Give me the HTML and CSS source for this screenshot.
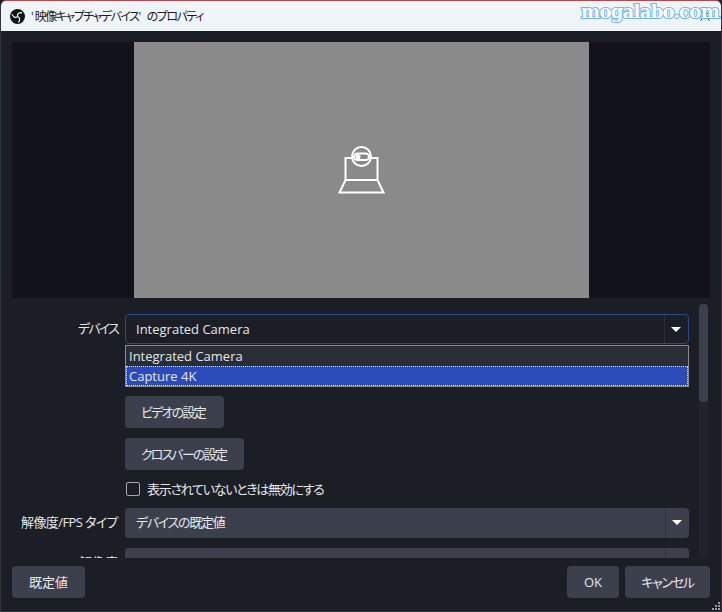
FILE: index.html
```html
<!DOCTYPE html>
<html lang="ja">
<head>
  <meta charset="UTF-8" />
  <title>'映像キャプチャデバイス' のプロパティ</title>
  <link rel="stylesheet" href="styles.css">
</head>
<body>

  <div class="window">
    <div class="titlebar">
      <svg class="obs-logo" width="15" height="15" viewBox="0 0 16 16">
        <circle cx="8" cy="8" r="8" fill="#111"/>
        <g fill="none" stroke="#f0f4f9" stroke-width="1.300">
          <path d="M8 8C7.500 5.500 9.500 3.200 13 4.200"/>
          <path d="M8 8C7.500 5.500 9.500 3.200 13 4.200" transform="rotate(120 8 8)"/>
          <path d="M8 8C7.500 5.500 9.500 3.200 13 4.200" transform="rotate(240 8 8)"/>
        </g>
      </svg>
      <span class="title-text"><span class="quote">'</span>映像キャプチャデバイス<span class="quote">'</span> のプロパティ</span>
      <svg class="close-x" width="10" height="10" viewBox="0 0 10 10">
        <path d="M0.500 0.500L9.500 9.500M9.500 0.500L0.500 9.500" stroke="#222" stroke-width="1" fill="none"/>
      </svg>
    </div>
    <div class="watermark">mogalabo.com</div>

    <div class="preview">
      <div class="preview-image">
        <svg width="48" height="48" viewBox="0 0 48 48">
          <g fill="none" stroke="#fff" stroke-width="2">
            <path d="M15 12H8.500V34M34 12H40.500V34"/>
            <path d="M8.500 34H40.500L46.500 46.500H2.500Z"/>
            <circle cx="24.500" cy="10.500" r="9.500"/>
            <rect x="17" y="7.500" width="15" height="6.500" rx="3.200"/>
          </g>
          <circle cx="21" cy="10.800" r="2.500" fill="#fff"/>
        </svg>
      </div>
    </div>

    <div class="settings">
      <div class="fields">
        <div class="row">
          <label class="row-label kana-tight">デバイス</label>
          <div class="combo combo-open">
            <span class="combo-value">Integrated Camera</span>
            <span class="combo-arrow"></span>
          </div>
        </div>
        <div class="row row-menu-space"></div>
        <div class="row">
          <button class="btn btn-video kana-tight">ビデオの設定</button>
        </div>
        <div class="row">
          <button class="btn btn-crossbar kana-tight">クロスバーの設定</button>
        </div>
        <div class="row row-check">
          <span class="checkbox"></span>
          <span class="kana">表示されていないときは無効にする</span>
        </div>
        <div class="row">
          <label class="row-label label-mixed">解像度/FPS タイプ</label>
          <div class="combo">
            <span class="combo-value combo-value-ja kana">デバイスの既定値</span>
            <span class="combo-arrow"></span>
          </div>
        </div>
        <div class="row">
          <label class="row-label">解像度</label>
          <div class="combo">
            <span class="combo-value"></span>
            <span class="combo-arrow"></span>
          </div>
        </div>
      </div>
      <div class="scrollbar"><div class="scroll-thumb"></div></div>

      <ul class="combo-menu">
        <li>Integrated Camera</li>
        <li class="selected">Capture 4K</li>
      </ul>
    </div>

    <div class="footer">
      <button class="btn btn-defaults">既定値</button>
      <div class="footer-right">
        <button class="btn btn-ok">OK</button>
        <button class="btn btn-cancel kana">キャンセル</button>
      </div>
    </div>
    <svg class="grip" width="10" height="10" viewBox="0 0 10 10">
      <path d="M7 1h2v2H7zM4 4h2v2H4zM7 4h2v2H7zM1 7h2v2H1zM4 7h2v2H4zM7 7h2v2H7z" fill="#9a9ca4"/>
    </svg>
  </div>

</body>
</html>
```

FILE: styles.css
```css
html, body {
  margin: 0;
  padding: 0;
  overflow: hidden;
}

body {
  background-color: #1c1e26;
  color: #e6e7ea;
  font-family: "Open Sans", "Noto Sans CJK JP", sans-serif;
  font-size: 13px;
  font-feature-settings: "palt";
}

.kana {
  letter-spacing: -1.3px;
}

.kana-tight {
  letter-spacing: -1.8px;
}

.label-mixed {
  letter-spacing: -0.6px;
}

.window {
  position: relative;
  display: flex;
  flex-direction: column;
  width: 722px;
  height: 612px;
  box-sizing: border-box;
  background-color: #1c1e26;
  border-top: 1px solid #b84a4e;
  border-left: 1px solid #33353d;
  border-right: 1px solid #33353d;
  border-bottom: 1px solid #33353d;
  border-radius: 6px 6px 0 0;
  overflow: hidden;
}

.titlebar {
  display: flex;
  align-items: center;
  height: 30px;
  padding: 0 9px;
  flex-shrink: 0;
  background-color: #eff4f9;
  color: #1c1c1c;
  font-size: 12px;
}

.obs-logo {
  margin-right: 6px;
}

.title-text {
  flex: 1;
  letter-spacing: -1.5px;
  word-spacing: 3px;
}

.quote {
  letter-spacing: 1px;
}

.close-x {
  margin-right: 2px;
}

.watermark {
  position: absolute;
  top: 0;
  right: 2px;
  font-family: "DejaVu Serif", serif;
  font-size: 18px;
  font-weight: bold;
  line-height: 22px;
  letter-spacing: -0.7px;
  color: #ffffff;
  -webkit-text-stroke: 2px #6db3ee;
  paint-order: stroke fill;
}

.preview {
  display: flex;
  justify-content: center;
  height: 256px;
  margin: 11px 11px 0;
  flex-shrink: 0;
  background-color: #12131a;
}

.preview-image {
  display: flex;
  align-items: center;
  justify-content: center;
  width: 455px;
  background-color: #8a8a8b;
}

.settings {
  position: relative;
  display: flex;
  height: 254px;
  margin-top: 6px;
  overflow: hidden;
  flex-shrink: 0;
}

.fields {
  width: 698px;
  padding-top: 10px;
  box-sizing: border-box;
}

.row {
  display: flex;
  align-items: center;
  min-height: 30px;
  margin-bottom: 10px;
  padding-left: 124px;
  position: relative;
}

.row-label {
  position: absolute;
  right: 581px;
  white-space: nowrap;
  line-height: 18px;
  top: 5px;
}

.row-menu-space {
  min-height: 0;
  height: 32px;
  padding: 0;
}

.row-check {
  min-height: 18px;
  height: 18px;
  gap: 7px;
  line-height: 18px;
}

.combo {
  display: flex;
  align-items: center;
  justify-content: space-between;
  box-sizing: border-box;
  width: 564px;
  height: 30px;
  background-color: #3c404d;
  border-radius: 4px;
}

.combo-open {
  background-color: #1c1e26;
  border: 1px solid #2a4a8c;
}

.combo-value {
  padding-left: 10px;
}

.combo-value-ja {
  padding-left: 11px;
  line-height: 18px;
  margin-top: -2px;
}

.combo-arrow {
  position: relative;
  width: 23px;
  height: 100%;
  border-left: 1px solid #2d2f38;
}

.combo-arrow::after {
  content: "";
  position: absolute;
  top: 12px;
  left: 6px;
  border-left: 5px solid transparent;
  border-right: 5px solid transparent;
  border-top: 5px solid #ffffff;
}

.combo-menu {
  position: absolute;
  top: 41px;
  left: 124px;
  width: 564px;
  box-sizing: border-box;
  margin: 0;
  padding: 0;
  list-style: none;
  background-color: #2b2d35;
  border: 1px solid #8a8c90;
}

.combo-menu li {
  height: 20px;
  line-height: 20px;
  padding-left: 3px;
  box-sizing: border-box;
}

.combo-menu .selected {
  background-color: #2b4cb8;
  outline: 1px dotted #e6e7ea;
  outline-offset: -1px;
}

.btn {
  box-sizing: border-box;
  height: 32px;
  padding: 0 0 1px;
  border: none;
  border-radius: 4px;
  background-color: #3c404d;
  color: #e6e7ea;
  font-family: inherit;
  font-size: 13px;
  font-feature-settings: inherit;
  white-space: nowrap;
}

.btn-video {
  width: 99px;
  padding-right: 3px;
}

.btn-crossbar {
  width: 119px;
  padding-right: 2px;
}

.checkbox {
  width: 12px;
  height: 12px;
  margin-left: 1px;
  border: 1px solid #a8a9ad;
  border-radius: 2px;
}

.scrollbar {
  width: 9px;
  height: 254px;
  background-color: #22242c;
  border-radius: 4px;
}

.scroll-thumb {
  height: 98px;
  background-color: #3c404d;
  border-radius: 4px;
}

.footer {
  display: flex;
  justify-content: space-between;
  padding: 8px 11px 0;
}

.footer-right {
  display: flex;
  gap: 6px;
}

.btn-defaults {
  width: 73px;
}

.btn-ok {
  width: 52px;
}

.btn-cancel {
  width: 85px;
}

.grip {
  position: absolute;
  right: 0;
  bottom: 0;
}
```
